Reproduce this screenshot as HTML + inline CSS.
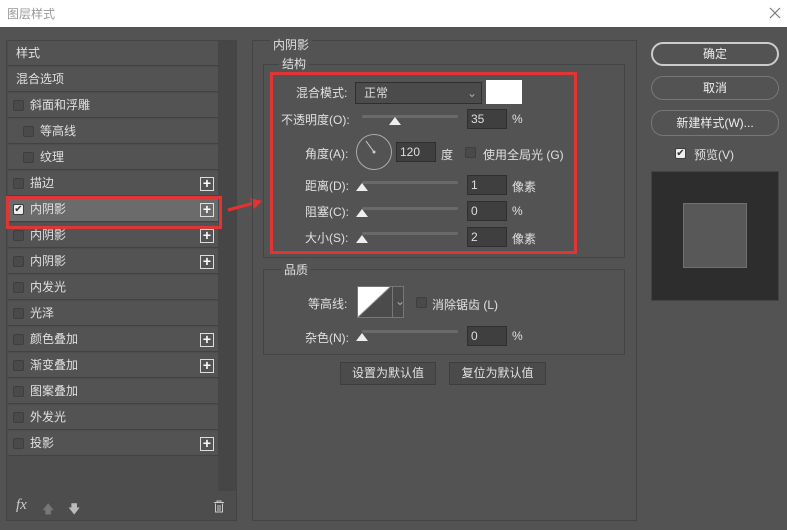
<!DOCTYPE html><html><head><meta charset="utf-8"><style>
*{margin:0;padding:0;box-sizing:border-box}
body{width:787px;height:530px;background:#535353;font-family:"Liberation Sans","Noto Sans CJK SC",sans-serif;font-size:12px;color:#e0e0e0;position:relative;overflow:hidden}
.a{position:absolute}
.title{left:0;top:0;width:787px;height:27px;background:#fff;color:#999;padding:5px 0 0 7px;font-size:12px}
.row{position:absolute;left:8px;width:210px;height:25px;background:#535353;border-bottom:1px solid #424242;line-height:25px;padding-left:8px}
.cb{position:absolute;width:11px;height:11px;border:1px solid #3e3e3e;background:#4a4a4a;border-radius:2px}
.plus{position:absolute;right:4px;top:6px;width:14px;height:14px;border:1px solid #ddd;color:#fff;font-size:14px;line-height:11px;text-align:center;font-weight:bold}
.inp{position:absolute;background:#3f3f3f;border:1px solid #2f2f2f;color:#ddd;padding-left:3px;height:20px;line-height:18px}
.sl{position:absolute;height:3px;background:#6a6a6a;border-radius:2px}
.th{position:absolute;width:0;height:0;border-left:6px solid transparent;border-right:6px solid transparent;border-bottom:8px solid #eee}
.btn{position:absolute;border:1px solid #777;border-radius:12px;text-align:center;color:#eee;line-height:22px}
.grp{position:absolute;border:1px solid #444}
.lbl{position:absolute;background:#535353;padding:0 3px}
</style></head><body>
<div class="a title">图层样式</div>
<svg class="a" style="left:769px;top:7px" width="12" height="12"><path d="M1 1L11 11M11 1L1 11" stroke="#777" stroke-width="1.2"/></svg>
<div class="a" style="left:6px;top:40px;width:231px;height:481px;border:1px solid #444;background:#4d4d4d"></div>
<div class="a" style="left:218px;top:41px;width:18px;height:450px;background:#464646"></div>

<div class="row" style="top:41px">样式</div>
<div class="row" style="top:67px">混合选项</div>
<div class="row" style="top:93px;padding-left:22px"><span class="cb" style="left:5px;top:7px"></span>斜面和浮雕</div>
<div class="row" style="top:119px;padding-left:32px"><span class="cb" style="left:15px;top:7px"></span>等高线</div>
<div class="row" style="top:145px;padding-left:32px"><span class="cb" style="left:15px;top:7px"></span>纹理</div>
<div class="row" style="top:171px;padding-left:22px"><span class="cb" style="left:5px;top:7px"></span>描边<span class="plus">+</span></div>
<div class="row" style="top:197px;padding-left:22px;background:#6b6b6b"><span class="cb" style="left:5px;top:7px;background:#eee;color:#333;font-size:10px;line-height:9px;text-align:center">✔</span>内阴影<span class="plus">+</span></div>
<div class="row" style="top:223px;padding-left:22px"><span class="cb" style="left:5px;top:7px"></span>内阴影<span class="plus">+</span></div>
<div class="row" style="top:249px;padding-left:22px"><span class="cb" style="left:5px;top:7px"></span>内阴影<span class="plus">+</span></div>
<div class="row" style="top:275px;padding-left:22px"><span class="cb" style="left:5px;top:7px"></span>内发光</div>
<div class="row" style="top:301px;padding-left:22px"><span class="cb" style="left:5px;top:7px"></span>光泽</div>
<div class="row" style="top:327px;padding-left:22px"><span class="cb" style="left:5px;top:7px"></span>颜色叠加<span class="plus">+</span></div>
<div class="row" style="top:353px;padding-left:22px"><span class="cb" style="left:5px;top:7px"></span>渐变叠加<span class="plus">+</span></div>
<div class="row" style="top:379px;padding-left:22px"><span class="cb" style="left:5px;top:7px"></span>图案叠加</div>
<div class="row" style="top:405px;padding-left:22px"><span class="cb" style="left:5px;top:7px"></span>外发光</div>
<div class="row" style="top:431px;padding-left:22px"><span class="cb" style="left:5px;top:7px"></span>投影<span class="plus">+</span></div>
<div class="a" style="left:6px;top:196px;width:216px;height:33px;border:3px solid #e03535"></div>
<svg class="a" style="left:226px;top:195px" width="40" height="20"><path d="M2 15 L28 8" stroke="#e83030" stroke-width="3"/><path d="M24 3 L36 6 L28 14Z" fill="#e83030"/></svg>
<div class="a" style="left:16px;top:497px;font-style:italic;font-family:'Liberation Serif',serif;font-size:15px;color:#ccc">fx</div>
<div class="a" style="left:42px;top:500px;color:#777">🡅</div>
<div class="a" style="left:68px;top:500px;color:#bbb">🡇</div>
<svg class="a" style="left:213px;top:500px" width="12" height="13"><path d="M1 2.5H11M4 2.5V1H8V2.5M2.5 3.5V12H9.5V3.5M5 5V11M7 5V11" stroke="#ccc" fill="none"/></svg>

<div class="a" style="left:252px;top:40px;width:385px;height:481px;border:1px solid #444"></div>
<div class="lbl" style="left:270px;top:36px">内阴影</div>
<div class="grp" style="left:263px;top:64px;width:362px;height:194px"></div>
<div class="lbl" style="left:279px;top:55px">结构</div>
<div class="a" style="left:270px;top:72px;width:307px;height:182px;border:3px solid #e03535"></div>
<div class="a" style="left:296px;top:84px">混合模式:</div>
<div class="inp" style="left:355px;top:82px;width:127px;height:22px;line-height:20px;background:#4b4b4b;padding-left:8px">正常<span style="position:absolute;right:4px;color:#aaa">⌄</span></div>
<div class="a" style="left:486px;top:80px;width:36px;height:24px;background:#fff"></div>
<div class="a" style="left:281px;top:111px">不透明度(O):</div>
<div class="sl" style="left:362px;top:115px;width:96px"></div><div class="th" style="left:389px;top:117px"></div>
<div class="inp" style="left:467px;top:109px;width:40px">35</div><div class="a" style="left:512px;top:112px">%</div>
<div class="a" style="left:305px;top:145px">角度(A):</div>
<div class="a" style="left:356px;top:134px;width:36px;height:36px;border:1px solid #aaa;border-radius:50%"></div>
<svg class="a" style="left:356px;top:134px" width="36" height="36"><path d="M18 18 L10 7" stroke="#ccc"/><circle cx="18" cy="18" r="1.5" fill="#ccc"/></svg>
<div class="inp" style="left:396px;top:142px;width:40px">120</div><div class="a" style="left:441px;top:146px">度</div>
<span class="cb" style="left:465px;top:147px"></span><div class="a" style="left:483px;top:146px">使用全局光 (G)</div>
<div class="a" style="left:305px;top:177px">距离(D):</div>
<div class="sl" style="left:362px;top:181px;width:96px"></div><div class="th" style="left:356px;top:183px"></div>
<div class="inp" style="left:467px;top:175px;width:40px">1</div><div class="a" style="left:512px;top:178px">像素</div>
<div class="a" style="left:305px;top:203px">阻塞(C):</div>
<div class="sl" style="left:362px;top:207px;width:96px"></div><div class="th" style="left:356px;top:209px"></div>
<div class="inp" style="left:467px;top:201px;width:40px">0</div><div class="a" style="left:512px;top:204px">%</div>
<div class="a" style="left:305px;top:229px">大小(S):</div>
<div class="sl" style="left:362px;top:232px;width:96px"></div><div class="th" style="left:356px;top:235px"></div>
<div class="inp" style="left:467px;top:227px;width:40px">2</div><div class="a" style="left:512px;top:230px">像素</div>

<div class="grp" style="left:263px;top:269px;width:362px;height:86px"></div>
<div class="lbl" style="left:281px;top:261px">品质</div>
<div class="a" style="left:308px;top:295px">等高线:</div>
<div class="a" style="left:357px;top:286px;width:47px;height:32px;border:1px solid #777;background:#4b4b4b"></div>
<svg class="a" style="left:358px;top:287px" width="32" height="30"><path d="M0 0H32L0 30Z" fill="#fff"/><path d="M32 0L0 30" stroke="#999"/></svg>
<div class="a" style="left:392px;top:287px;width:1px;height:30px;background:#777"></div>
<div class="a" style="left:395px;top:294px;color:#aaa">⌄</div>
<span class="cb" style="left:416px;top:297px"></span><div class="a" style="left:432px;top:296px">消除锯齿 (L)</div>
<div class="a" style="left:305px;top:329px">杂色(N):</div>
<div class="sl" style="left:362px;top:330px;width:96px"></div><div class="th" style="left:356px;top:333px"></div>
<div class="inp" style="left:467px;top:326px;width:40px">0</div><div class="a" style="left:512px;top:329px">%</div>
<div class="a" style="left:340px;top:362px;width:96px;height:23px;background:#4b4b4b;border:1px solid #3e3e3e;text-align:center;line-height:21px">设置为默认值</div>
<div class="a" style="left:449px;top:362px;width:97px;height:23px;background:#4b4b4b;border:1px solid #3e3e3e;text-align:center;line-height:21px">复位为默认值</div>

<div class="btn" style="left:651px;top:42px;width:128px;height:24px;border:2px solid #ccc;line-height:20px">确定</div>
<div class="btn" style="left:651px;top:76px;width:128px;height:24px">取消</div>
<div class="btn" style="left:651px;top:110px;width:128px;height:26px;line-height:24px">新建样式(W)...</div>
<span class="cb" style="left:675px;top:148px;background:#eee;color:#333;font-size:10px;line-height:9px;text-align:center">✔</span>
<div class="a" style="left:694px;top:146px">预览(V)</div>
<div class="a" style="left:651px;top:171px;width:128px;height:130px;background:#2d2d2d;border:1px solid #444"></div>
<div class="a" style="left:683px;top:203px;width:64px;height:65px;background:#585858;border:1px solid #707070"></div>
</body></html>
